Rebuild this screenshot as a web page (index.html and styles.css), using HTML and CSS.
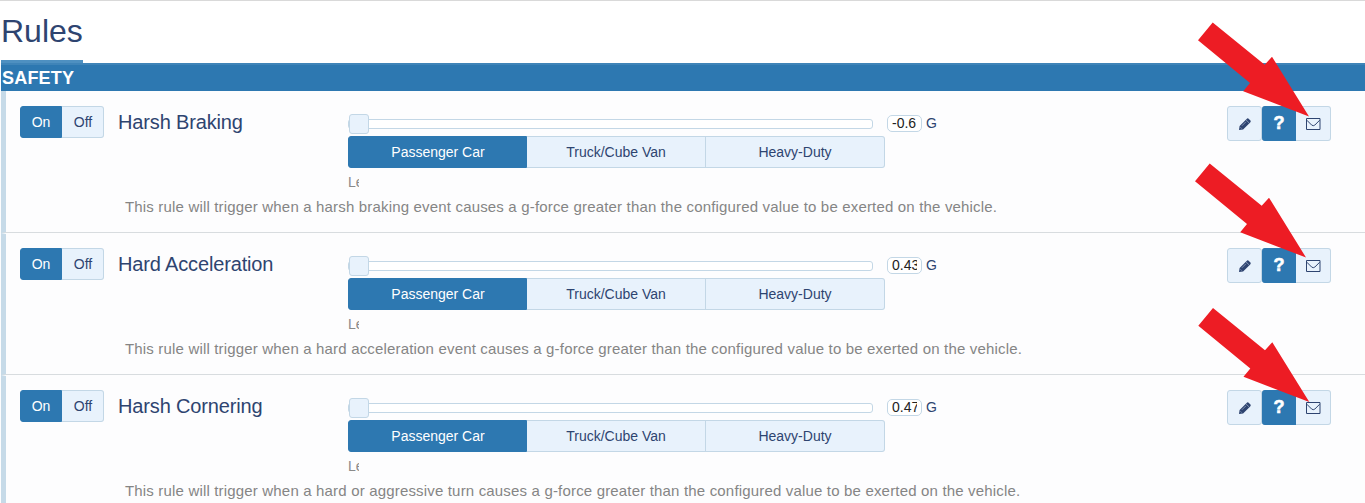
FILE: index.html
```html
<!DOCTYPE html>
<html lang="en">
<head>
<meta charset="utf-8">
<title>Rules</title>
<link rel="stylesheet" href="styles.css">
</head>
<body>
<svg class="symbols" aria-hidden="true">
  <symbol id="pencil" viewBox="0 0 12 12"><path d="M0 12L.6 7.9 7.6.9q1.1-1.2 2.3 0L11.2 2.2q1.1 1.1 0 2.3L4.1 11.4z"/><path d="M7 1.9L10.2 5M1.5 9.4l1.2 1.2M2.9 7.8l4-4" fill="none" stroke="#b9c7dc" stroke-width=".6"/></symbol>
  <symbol id="mail" viewBox="0 0 15 12"><path d="M.5.5h13.5v11H.5zM.8 2.2l4.9 4.9q1.6 1.2 3.1 0l4.9-4.9" fill="none" stroke="currentColor" stroke-width="1"/></symbol>
</svg>
<header class="page-header"><h1 class="page-title">Rules</h1></header>
<main class="rules">
  <h2 class="category">SAFETY</h2>
  <section class="rule">
    <div class="controls">
      <div class="toggle"><button class="btn active">On</button><button class="btn">Off</button></div>
      <h3 class="name">Harsh Braking</h3>
      <div class="setting">
        <div class="range"><div class="slider"><span class="thumb"></span></div><span class="value"><span class="digits">-0.6</span></span><span class="unit">G</span></div>
        <div class="vehicles"><button class="btn active">Passenger Car</button><button class="btn">Truck/Cube Van</button><button class="btn">Heavy-Duty</button></div>
        <div class="level">Le</div>
      </div>
      <div class="actions"><button class="btn"><svg class="pencil"><use href="#pencil"/></svg></button><button class="btn active help">?</button><button class="btn"><svg class="mail"><use href="#mail"/></svg></button></div>
    </div>
    <p class="description">This rule will trigger when a harsh braking event causes a g-force greater than the configured value to be exerted on the vehicle.</p>
  </section>
  <section class="rule">
    <div class="controls">
      <div class="toggle"><button class="btn active">On</button><button class="btn">Off</button></div>
      <h3 class="name">Hard Acceleration</h3>
      <div class="setting">
        <div class="range"><div class="slider"><span class="thumb"></span></div><span class="value"><span class="digits">0.43</span></span><span class="unit">G</span></div>
        <div class="vehicles"><button class="btn active">Passenger Car</button><button class="btn">Truck/Cube Van</button><button class="btn">Heavy-Duty</button></div>
        <div class="level">Le</div>
      </div>
      <div class="actions"><button class="btn"><svg class="pencil"><use href="#pencil"/></svg></button><button class="btn active help">?</button><button class="btn"><svg class="mail"><use href="#mail"/></svg></button></div>
    </div>
    <p class="description">This rule will trigger when a hard acceleration event causes a g-force greater than the configured value to be exerted on the vehicle.</p>
  </section>
  <section class="rule">
    <div class="controls">
      <div class="toggle"><button class="btn active">On</button><button class="btn">Off</button></div>
      <h3 class="name">Harsh Cornering</h3>
      <div class="setting">
        <div class="range"><div class="slider"><span class="thumb"></span></div><span class="value"><span class="digits">0.47</span></span><span class="unit">G</span></div>
        <div class="vehicles"><button class="btn active">Passenger Car</button><button class="btn">Truck/Cube Van</button><button class="btn">Heavy-Duty</button></div>
        <div class="level">Le</div>
      </div>
      <div class="actions"><button class="btn"><svg class="pencil"><use href="#pencil"/></svg></button><button class="btn active help">?</button><button class="btn"><svg class="mail"><use href="#mail"/></svg></button></div>
    </div>
    <p class="description">This rule will trigger when a hard or aggressive turn causes a g-force greater than the configured value to be exerted on the vehicle.</p>
  </section>
</main>
<svg class="arrows" viewBox="0 0 1365 503" aria-hidden="true">
  <defs><path id="arrow" d="M1212.7 22.5L1198 40.3 1250 83 1243.2 91.3 1309 116.5 1272 56.7 1264.7 64.7z"/></defs>
  <use href="#arrow"/>
  <use href="#arrow" x="-3" y="141"/>
  <use href="#arrow" x=".3" y="285.5"/>
</svg>
</body>
</html>
```
FILE: styles.css
```css
* { box-sizing: border-box; }
body {
  margin: 0;
  height: 503px;
  overflow: hidden;
  position: relative;
  background: #fdfdfe;
  color: #2e4470;
  font-family: "Liberation Sans", Arial, sans-serif;
}
h1, h2, h3, p { margin: 0; font-weight: 400; }
.symbols { display: none; }
.page-header {
  height: 63px;
  padding-left: 1px;
  border-top: 1px solid #d9d9d9;
  background: #fff;
}
.page-title {
  width: 82px;
  height: 62px;
  padding-top: 12px;
  border-bottom: 3px solid #4e90c1;
  font-size: 32px;
  line-height: 36px;
}
.rules { padding-left: 1px; }
.category {
  height: 28px;
  padding-left: 1px;
  border-top: 2px solid #3f84b8;
  background: #2d78b1;
  color: #fff;
  font-size: 18px;
  font-weight: 700;
  line-height: 26px;
  letter-spacing: .2px;
}
.rule {
  height: 142px;
  padding: 15px 34px 0 14px;
  border-left: 5px solid #c6dae8;
  border-bottom: 1px solid #d8dcdf;
}
.rule + .rule { border-top: 1px solid #fdfdfe; padding-top: 14px; }
.controls { display: flex; height: 90px; align-items: flex-start; }
.toggle, .vehicles, .actions { display: flex; }
.btn {
  flex: 1 1 0;
  display: flex;
  align-items: center;
  justify-content: center;
  height: 32px;
  margin: 0;
  padding: 0;
  border: 1px solid #c3d7e6;
  background: #e8f2fc;
  color: #2e4470;
  font: 14px "Liberation Sans", Arial, sans-serif;
}
.btn + .btn { border-left: 0; }
.btn:first-child { border-radius: 3px 0 0 3px; }
.btn:last-child { border-radius: 0 3px 3px 0; }
.btn.active { background: #2d78b1; border-color: #2d78b1; color: #fff; }
.toggle { width: 84px; }
.toggle .btn { flex: none; width: 42px; }
.toggle .btn:last-child { padding-left: 1px; }
.vehicles .btn:first-child { flex: none; width: 179px; padding-left: 1px; }
.name {
  width: 230px;
  margin-left: 14px;
  font-size: 20px;
  line-height: 32px;
  letter-spacing: -.15px;
}
.setting { width: 600px; }
.range { display: flex; align-items: center; height: 30px; padding-top: 5px; }
.slider {
  display: flex;
  align-items: center;
  width: 525px;
  height: 10px;
  border: 1px solid #c3d7e6;
  border-radius: 3px;
  background: #fff;
}
.thumb {
  flex: none;
  width: 20px;
  height: 20px;
  border: 1px solid #c3d7e6;
  border-radius: 3px;
  background: #e8f2fc;
}
.value {
  width: 35px;
  height: 17px;
  margin-left: 14px;
  padding: 0 4px;
  border: 1px solid #c3d7e6;
  border-radius: 5px;
  background: #fff;
  color: #222;
  font-size: 14px;
  line-height: 15px;
}
.digits { display: block; width: 25px; overflow: hidden; white-space: nowrap; }
.unit { margin-left: 4px; font-size: 14px; line-height: 16px; padding-bottom: 1px; }
.vehicles { width: 537px; }
.level {
  width: 11px;
  height: 20px;
  margin-top: 4px;
  overflow: hidden;
  color: #8a8a8a;
  font-size: 14px;
  line-height: 20px;
}
.actions { width: 104px; margin-left: auto; }
.actions .btn { flex: none; width: 35px; height: 35px; }
.actions .btn:first-child { border-radius: 3px; }
.actions .btn.help { width: 34px; padding-left: 1px; border-radius: 3px 0 0 3px; font-size: 18px; font-weight: 700; -webkit-text-stroke: .6px #fff; }
.pencil { width: 12px; height: 12px; fill: #2e4470; }
.mail { width: 15px; height: 12px; color: #2e4470; }
.description {
  padding-left: 105px;
  color: #858585;
  font-size: 15px;
  line-height: 22px;
  letter-spacing: .173px;
  white-space: nowrap;
}
.arrows {
  position: absolute;
  inset: 0;
  width: 1365px;
  height: 503px;
  fill: #ed1c24;
}
```
